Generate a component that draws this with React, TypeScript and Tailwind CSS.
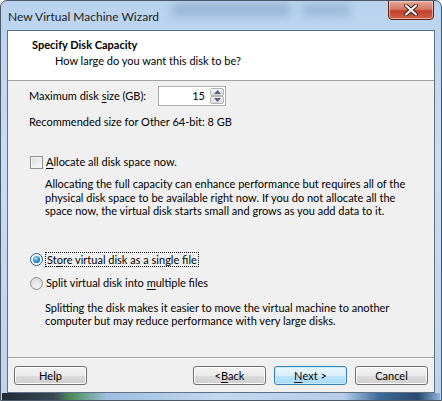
import React from "react";

const font = { fontFamily: 'Lato, "Noto Sans", sans-serif' };

function WinButton({ children, def }: { children: React.ReactNode; def?: boolean }) {
  return (
    <div
      className={
        "w-[73px] h-[19px] rounded-[3px] border flex items-center justify-center text-[11px] leading-none text-black " +
        (def
          ? "border-[#3c7fb1] bg-[linear-gradient(#eaf6fd_0%,#d9f0fc_50%,#bee6fd_50%,#a7d9f5_100%)] shadow-[inset_0_0_0_1px_#c9ecfc]"
          : "border-[#707070] bg-[linear-gradient(#f2f2f2_0%,#ebebeb_50%,#dddddd_50%,#cfcfcf_100%)] shadow-[inset_0_0_0_1px_#fcfcfc]")
      }
    >
      {children}
    </div>
  );
}

function U({ children }: { children: React.ReactNode }) {
  return <span className="underline underline-offset-[2px]">{children}</span>;
}

export default function App() {
  return (
    <div style={font} className="w-[442px] h-[401px] overflow-hidden bg-white">
      <div className="relative w-[442px] h-[401px] rounded-t-[7px] border border-[#4a5868] bg-[linear-gradient(180deg,#b9d3ee_0%,#c9ddf3_40%,#bcd4ee_100%)] flex flex-col overflow-hidden">
        {/* blurred background shapes (glass) */}
        <div className="absolute left-[170px] top-[2px] w-[120px] h-[14px] rounded-[6px] bg-[#6d8db3] opacity-40 blur-[4px]" />
        <div className="absolute left-[300px] top-[2px] w-[50px] h-[14px] rounded-[6px] bg-[#6d8db3] opacity-35 blur-[4px]" />
        {/* title bar */}
        <div className="relative h-[29px] flex items-center pl-[7px] text-[12px] text-[#1e1e1e]">
          <span className="pt-[2px]">New Virtual Machine Wizard</span>
          <div className="absolute right-[7px] top-[-1px] w-[46px] h-[20px] rounded-b-[4px] border border-[#5a2218] bg-[linear-gradient(180deg,#e8a897_0%,#d47c68_45%,#c0402a_55%,#d0624a_100%)] shadow-[inset_0_0_0_1px_rgba(255,220,210,0.6)] flex items-center justify-center">
            <svg width="14" height="12" viewBox="0 0 14 12">
              <path d="M2 1.5 L12 10.5 M12 1.5 L2 10.5" stroke="#3a1a14" strokeWidth="4" strokeLinecap="round" />
              <path d="M2 1.5 L12 10.5 M12 1.5 L2 10.5" stroke="#ffffff" strokeWidth="2.2" strokeLinecap="round" />
            </svg>
          </div>
        </div>
        {/* client */}
        <div className="mx-[6px] h-[363px] border border-[#5f7186] flex flex-col bg-[#f0f0f0]">
          {/* header */}
          <div className="h-[50px] bg-white border-b border-[#a0a0a0] pl-[24px] pt-[6px]">
            <div className="text-[11px] font-bold leading-[16px] text-black">Specify Disk Capacity</div>
            <div className="pl-[23px] text-[11px] leading-[16px] text-black">How large do you want this disk to be?</div>
          </div>
          {/* body */}
          <div className="flex-1 flex flex-col text-[11px] text-black whitespace-nowrap">
            <div className="mt-[5px] h-[20px] flex items-center">
              <span className="pl-[21px] w-[150px]">
                Maximum disk <U>s</U>ize (GB):
              </span>
              <div className="w-[51px] h-[20px] bg-white border border-[#abadb3] border-r-0 flex items-center justify-end pr-[4px]">
                15
              </div>
              <div className="w-[17px] h-[20px] flex flex-col bg-white p-[1px] border border-[#abadb3] border-l-0">
                <div className="flex-1 rounded-[2px] border border-[#b4b4b4] bg-[linear-gradient(#f4f4f4,#dedede)] flex items-center justify-center">
                  <svg width="7" height="4" viewBox="0 0 7 4"><path d="M0 4 L3.5 0 L7 4Z" fill="#4d6185" /></svg>
                </div>
                <div className="flex-1 rounded-[2px] border border-[#b4b4b4] bg-[linear-gradient(#f4f4f4,#dedede)] flex items-center justify-center">
                  <svg width="7" height="4" viewBox="0 0 7 4"><path d="M0 0 L3.5 4 L7 0Z" fill="#4d6185" /></svg>
                </div>
              </div>
            </div>
            <div className="mt-[8px] pl-[21px] leading-[15px]">Recommended size for Other 64-bit: 8 GB</div>
            <div className="mt-[26px] h-[14px] flex items-center pl-[22px]">
              <div className="w-[13px] h-[13px] border border-[#8e8f8f] bg-[linear-gradient(135deg,#dcdcdc,#fafafa)] shadow-[inset_0_0_0_1px_#f4f4f4]" />
              <span className="pl-[3px]">
                <U>A</U>llocate all disk space now.
              </span>
            </div>
            <div className="mt-[8px] pl-[37px] leading-[13.5px]">
              Allocating the full capacity can enhance performance but requires all of the
              <br />
              physical disk space to be available right now. If you do not allocate all the
              <br />
              space now, the virtual disk starts small and grows as you add data to it.
            </div>
            <div className="mt-[35px] h-[14px] flex items-center pl-[22px]">
              <div className="w-[13px] h-[13px] rounded-full border border-[#2c628b] bg-[radial-gradient(circle,#ffffff_0%,#dfe9f3_100%)] flex items-center justify-center">
                <div className="w-[7px] h-[7px] rounded-full bg-[radial-gradient(circle_at_40%_35%,#a9e3fb_0%,#2a8fd2_50%,#0c4f86_100%)]" />
              </div>
              <span className="ml-[2px] px-[1px] border border-dotted border-black leading-[13px]">
                St<U>o</U>re virtual disk as a single file
              </span>
            </div>
            <div className="mt-[10px] h-[14px] flex items-center pl-[22px]">
              <div className="w-[13px] h-[13px] rounded-full border border-[#8e8f8f] bg-[radial-gradient(circle_at_50%_70%,#f5f5f5_0%,#d2d2d2_100%)]" />
              <span className="ml-[3px]">
                Split virtual disk into <U>m</U>ultiple files
              </span>
            </div>
            <div className="mt-[10px] pl-[37px] leading-[13.5px]">
              Splitting the disk makes it easier to move the virtual machine to another
              <br />
              computer but may reduce performance with very large disks.
            </div>
          </div>
          {/* footer */}
          <div className="h-[35px] border-t border-[#a0a0a0] shadow-[inset_0_1px_0_#ffffff] flex items-start pt-[8px] px-[6px]">
            <WinButton>Help</WinButton>
            <div className="flex-1" />
            <div className="flex gap-[8px]">
              <WinButton>
                &lt; <U>B</U>ack
              </WinButton>
              <WinButton def>
                <U>N</U>ext &gt;
              </WinButton>
              <WinButton>Cancel</WinButton>
            </div>
          </div>
        </div>
        {/* bottom strip */}
        <div className="flex-1 bg-[linear-gradient(90deg,#1e2a36_0%,#3b4a58_12%,#4f8f5c_16%,#9fbfdf_24%,#c2d8ee_50%,#b5cde8_78%,#3e6a9a_86%,#2b4a70_95%,#8fb0d8_100%)] mx-[1px]" />
      </div>
    </div>
  );
}
